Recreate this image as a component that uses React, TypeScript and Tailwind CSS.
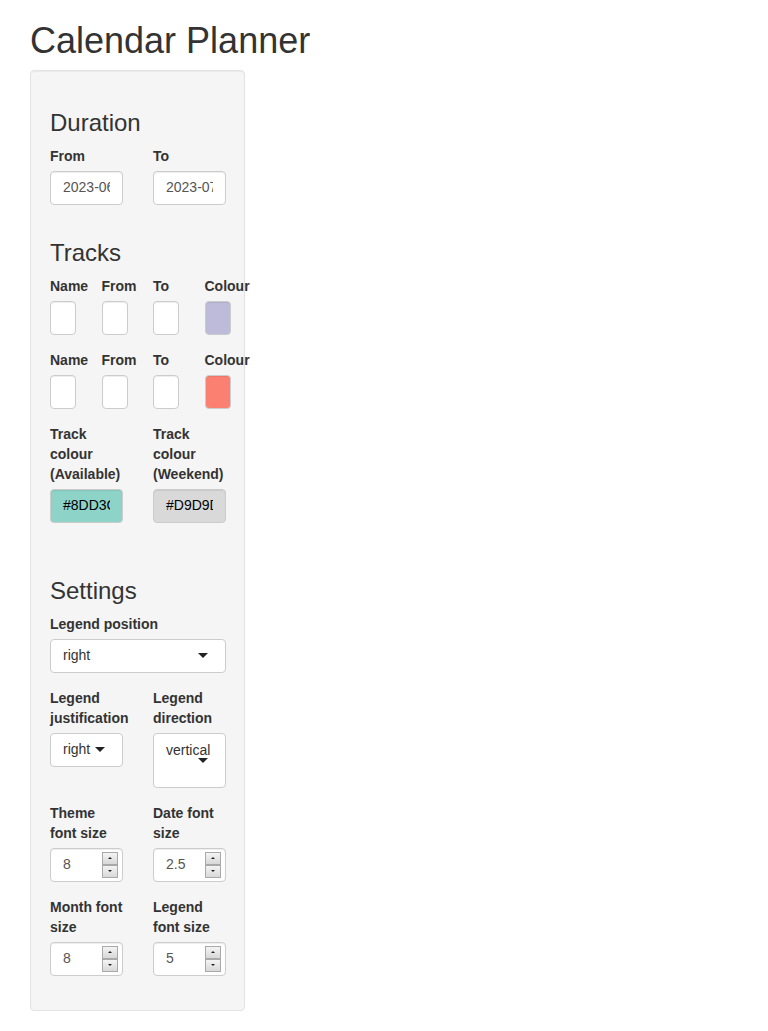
import React from "react";

const font = { fontFamily: '"Liberation Sans", Arial, sans-serif' };

function Label({ children, nowrap }: { children: React.ReactNode; nowrap?: boolean }) {
  return (
    <div className={`font-bold text-[14px] leading-[20px] mb-[5px] text-[#333] ${nowrap ? "whitespace-nowrap" : ""}`}>
      {children}
    </div>
  );
}

function TextBox({ value, bg = "bg-white", color = "text-[#555]" }: { value: string; bg?: string; color?: string }) {
  return (
    <div className={`h-[34px] w-[73px] border border-[#ccc] rounded-[4px] ${bg} px-[12px] flex items-center shadow-[inset_0_1px_1px_rgba(0,0,0,0.075)]`}>
      <span className={`block overflow-hidden whitespace-nowrap text-[14px] ${color}`}>{value}</span>
    </div>
  );
}

function SmallBox({ bg = "bg-white" }: { bg?: string }) {
  return <div className={`h-[34px] w-[26px] border border-[#ccc] rounded-[4px] ${bg} shadow-[inset_0_1px_1px_rgba(0,0,0,0.075)]`} />;
}

function Caret() {
  return <span className="inline-block w-0 h-0 border-l-[5px] border-r-[5px] border-t-[5px] border-l-transparent border-r-transparent border-t-[#222]" />;
}

function SpinBtn({ up }: { up?: boolean }) {
  return (
    <div className="w-[16px] h-[13px] border border-[#a9a9a9] bg-gradient-to-b from-[#f4f4f4] to-[#d8d8d8] flex items-center justify-center">
      {up ? (
        <span className="w-0 h-0 border-l-[2px] border-r-[2px] border-b-[2px] border-l-transparent border-r-transparent border-b-[#222]" />
      ) : (
        <span className="w-0 h-0 border-l-[2px] border-r-[2px] border-t-[2px] border-l-transparent border-r-transparent border-t-[#222]" />
      )}
    </div>
  );
}

function NumBox({ value }: { value: string }) {
  return (
    <div className="h-[34px] w-[73px] border border-[#ccc] rounded-[4px] bg-white pl-[12px] pr-[4px] flex items-center justify-between shadow-[inset_0_1px_1px_rgba(0,0,0,0.075)]">
      <span className="text-[14px] text-[#555]">{value}</span>
      <div className="flex flex-col">
        <SpinBtn up />
        <SpinBtn />
      </div>
    </div>
  );
}

function H3({ children, extraTop }: { children: React.ReactNode; extraTop?: boolean }) {
  return (
    <h3 className={`text-[24px] leading-[26px] font-medium text-[#333] ${extraTop ? "mt-[40px]" : "mt-[20px]"} mb-[10px]`}>
      {children}
    </h3>
  );
}

function Two({ children }: { children: React.ReactNode }) {
  return <div className="flex gap-[30px] mb-[15px]">{children}</div>;
}

function Cell2({ children }: { children: React.ReactNode }) {
  return <div className="w-[73px] shrink-0">{children}</div>;
}

function TrackRow({ colour }: { colour: string }) {
  return (
    <div className="flex gap-[25.5px] mb-[15px]">
      {["Name", "From", "To"].map((l) => (
        <div key={l} className="w-[26px] shrink-0">
          <Label nowrap>{l}</Label>
          <SmallBox />
        </div>
      ))}
      <div className="w-[26px] shrink-0">
        <Label nowrap>Colour</Label>
        <SmallBox bg={colour} />
      </div>
    </div>
  );
}

export default function App() {
  return (
    <div className="min-h-[1031px] bg-white text-[#333] pl-[30px] pt-[21px]" style={font}>
      <h1 className="text-[36px] leading-[39.6px] font-medium mb-[9px]">Calendar Planner</h1>
      <div className="w-[215px] bg-[#f5f5f5] border border-[#e3e3e3] rounded-[4px] p-[19px] flex flex-col shadow-[inset_0_1px_1px_rgba(0,0,0,0.05)]">
        <H3>Duration</H3>
        <Two>
          <Cell2>
            <Label>From</Label>
            <TextBox value="2023-06-01" />
          </Cell2>
          <Cell2>
            <Label>To</Label>
            <TextBox value="2023-07-31" />
          </Cell2>
        </Two>

        <H3>Tracks</H3>
        <TrackRow colour="bg-[#BEBADA]" />
        <TrackRow colour="bg-[#FB8072]" />
        <Two>
          <Cell2>
            <Label>Track colour (Available)</Label>
            <TextBox value="#8DD3C7" bg="bg-[#8DD3C7]" color="text-black" />
          </Cell2>
          <Cell2>
            <Label>Track colour (Weekend)</Label>
            <TextBox value="#D9D9D9" bg="bg-[#D9D9D9]" color="text-black" />
          </Cell2>
        </Two>

        <H3 extraTop>Settings</H3>
        <div className="mb-[15px]">
          <Label>Legend position</Label>
          <div className="h-[34px] w-[176px] border border-[#ccc] rounded-[4px] bg-white pl-[12px] pr-[17px] flex items-center justify-between">
            <span className="text-[14px] text-[#333]">right</span>
            <Caret />
          </div>
        </div>
        <Two>
          <Cell2>
            <Label>Legend justification</Label>
            <div className="h-[34px] w-[73px] border border-[#ccc] rounded-[4px] bg-white pl-[12px] flex items-center gap-[5px]">
              <span className="text-[14px] text-[#333]">right</span>
              <Caret />
            </div>
          </Cell2>
          <Cell2>
            <Label>Legend direction</Label>
            <div className="h-[55px] w-[73px] border border-[#ccc] rounded-[4px] bg-white pl-[12px] pt-[6px] flex flex-col">
              <span className="text-[14px] leading-[20px] text-[#333]">vertical</span>
              <span className="pl-[32px] -mt-[2px] flex">
                <Caret />
              </span>
            </div>
          </Cell2>
        </Two>
        <Two>
          <Cell2>
            <Label>Theme font size</Label>
            <NumBox value="8" />
          </Cell2>
          <Cell2>
            <Label>Date font size</Label>
            <NumBox value="2.5" />
          </Cell2>
        </Two>
        <Two>
          <Cell2>
            <Label>Month font size</Label>
            <NumBox value="8" />
          </Cell2>
          <Cell2>
            <Label>Legend font size</Label>
            <NumBox value="5" />
          </Cell2>
        </Two>
      </div>
    </div>
  );
}
